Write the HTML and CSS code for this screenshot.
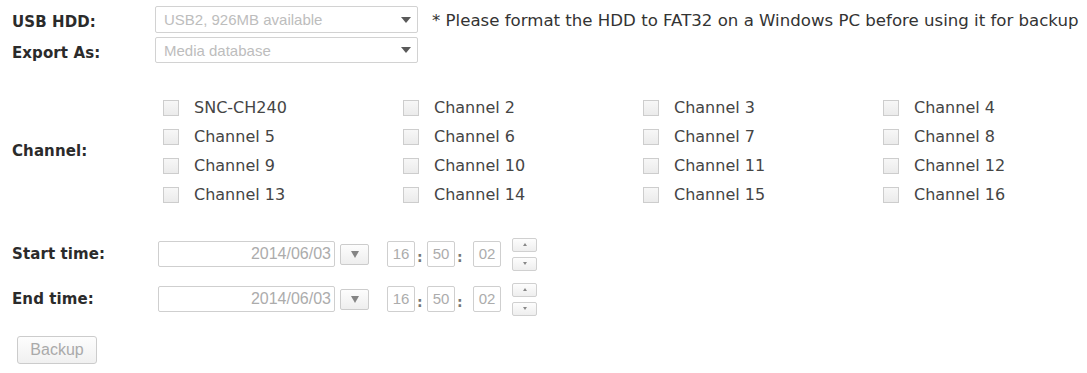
FILE: index.html
```html
<!DOCTYPE html>
<html>
<head>
<meta charset="utf-8">
<link rel="stylesheet" href="styles.css">
</head>
<body>
<div class="form">
  <div class="row row-usb">
    <div class="label">USB HDD:</div>
    <div class="select"><span class="sel-text">USB2, 926MB available</span><span class="sel-arrow"></span></div>
    <div class="note">* Please format the HDD to FAT32 on a Windows PC before using it for backup</div>
  </div>
  <div class="row row-export">
    <div class="label">Export As:</div>
    <div class="select"><span class="sel-text">Media database</span><span class="sel-arrow"></span></div>
  </div>
  <div class="row row-channel">
    <div class="label">Channel:</div>
    <div class="channels">
      <label class="ch"><span class="cb"></span>SNC-CH240</label>
      <label class="ch"><span class="cb"></span>Channel 2</label>
      <label class="ch"><span class="cb"></span>Channel 3</label>
      <label class="ch"><span class="cb"></span>Channel 4</label>
      <label class="ch"><span class="cb"></span>Channel 5</label>
      <label class="ch"><span class="cb"></span>Channel 6</label>
      <label class="ch"><span class="cb"></span>Channel 7</label>
      <label class="ch"><span class="cb"></span>Channel 8</label>
      <label class="ch"><span class="cb"></span>Channel 9</label>
      <label class="ch"><span class="cb"></span>Channel 10</label>
      <label class="ch"><span class="cb"></span>Channel 11</label>
      <label class="ch"><span class="cb"></span>Channel 12</label>
      <label class="ch"><span class="cb"></span>Channel 13</label>
      <label class="ch"><span class="cb"></span>Channel 14</label>
      <label class="ch"><span class="cb"></span>Channel 15</label>
      <label class="ch"><span class="cb"></span>Channel 16</label>
    </div>
  </div>
  <div class="row row-time row-start">
    <div class="label">Start time:</div>
    <div class="date">2014/06/03</div>
    <div class="date-btn"><span class="tri-down"></span></div>
    <div class="tbox">16</div><span class="colon">:</span>
    <div class="tbox">50</div><span class="colon colon-2">:</span>
    <div class="tbox">02</div>
    <div class="spin">
      <div class="spin-btn"><span class="tri-up-s"></span></div>
      <div class="spin-btn"><span class="tri-down-s"></span></div>
    </div>
  </div>
  <div class="row row-time row-end">
    <div class="label">End time:</div>
    <div class="date">2014/06/03</div>
    <div class="date-btn"><span class="tri-down"></span></div>
    <div class="tbox">16</div><span class="colon">:</span>
    <div class="tbox">50</div><span class="colon colon-2">:</span>
    <div class="tbox">02</div>
    <div class="spin">
      <div class="spin-btn"><span class="tri-up-s"></span></div>
      <div class="spin-btn"><span class="tri-down-s"></span></div>
    </div>
  </div>
  <div class="backup">Backup</div>
</div>
</body>
</html>
```
FILE: styles.css
```css
html, body {
  margin: 0;
  padding: 0;
  background: #fff;
}
.form {
  padding: 6px 0 0 12px;
  font-family: "DejaVu Sans", Verdana, sans-serif;
  font-size: 16px;
  color: #444;
}
.row {
  display: flex;
  align-items: center;
}
.label {
  width: 143px;
  flex: none;
  font-weight: bold;
  font-size: 15px;
  letter-spacing: 0.1px;
  color: #2b2b2b;
}
.row-usb .label, .row-export .label {
  padding-top: 5px;
}
.select {
  box-sizing: border-box;
  width: 263px;
  height: 27px;
  border: 1px solid #d2d2d2;
  border-radius: 2px;
  display: flex;
  align-items: center;
  justify-content: space-between;
  padding: 0 6px 0 8px;
  font-family: "Liberation Sans", Arial, sans-serif;
  font-size: 15px;
  color: #bdbdbd;
}
.row-export {
  margin-top: 4px;
}
.row-export .select {
  height: 26px;
}
.sel-arrow {
  width: 0;
  height: 0;
  border-left: 5px solid transparent;
  border-right: 5px solid transparent;
  border-top: 6px solid #5a5a5a;
}
.note {
  margin-left: 14px;
  padding-top: 1px;
  color: #333;
  font-size: 16.6px;
}
.row-channel {
  margin-top: 30px;
}
.channels {
  margin-left: 8px;
  display: grid;
  grid-template-columns: repeat(4, 240px);
  grid-auto-rows: 29px;
}
.ch {
  display: flex;
  align-items: center;
  color: #454545;
}
.cb {
  box-sizing: border-box;
  width: 16px;
  height: 16px;
  border: 1px solid #cdcdcd;
  background: linear-gradient(#f7f7f7, #ebebeb);
  margin-right: 15px;
  flex: none;
}
.row-time {
  height: 34px;
}
.row-start {
  margin-top: 28px;
}
.row-end {
  margin-top: 11px;
}
.date {
  box-sizing: border-box;
  margin-left: 3px;
  width: 177px;
  height: 26px;
  border: 1px solid #cfcfcf;
  border-radius: 2px;
  text-align: right;
  padding-right: 3px;
  line-height: 24px;
  font-family: "Liberation Sans", Arial, sans-serif;
  font-size: 16px;
  color: #acacac;
}
.date-btn {
  box-sizing: border-box;
  margin-left: 5px;
  width: 29px;
  height: 21px;
  border: 1px solid #cccccc;
  border-radius: 2px;
  background: linear-gradient(#fdfdfd, #eeeeee);
  display: flex;
  align-items: center;
  justify-content: center;
}
.tri-down {
  width: 0;
  height: 0;
  border-left: 4px solid transparent;
  border-right: 4px solid transparent;
  border-top: 7px solid #858585;
}
.tbox {
  box-sizing: border-box;
  width: 28px;
  height: 26px;
  border: 1px solid #cfcfcf;
  border-radius: 2px;
  text-align: center;
  line-height: 24px;
  font-family: "Liberation Sans", Arial, sans-serif;
  font-size: 15px;
  color: #acacac;
}
.date-btn + .tbox {
  margin-left: 18px;
}
.colon {
  width: 12px;
  text-align: left;
  padding-left: 2px;
  box-sizing: border-box;
  font-weight: bold;
  color: #777;
  font-size: 14px;
  padding-top: 6px;
}
.colon-2 {
  width: 18px;
}
.spin {
  margin-left: 11px;
  display: flex;
  flex-direction: column;
  gap: 5px;
}
.spin-btn {
  box-sizing: border-box;
  width: 25px;
  height: 14px;
  border: 1px solid #d0d0d0;
  border-radius: 2px;
  background: linear-gradient(#fdfdfd, #eeeeee);
  display: flex;
  align-items: center;
  justify-content: center;
}
.tri-up-s {
  width: 0;
  height: 0;
  border-left: 2px solid transparent;
  border-right: 2px solid transparent;
  border-bottom: 3px solid #888;
}
.tri-down-s {
  width: 0;
  height: 0;
  border-left: 2px solid transparent;
  border-right: 2px solid transparent;
  border-top: 3px solid #888;
}
.backup {
  box-sizing: border-box;
  margin-top: 20px;
  margin-left: 5px;
  width: 80px;
  height: 28px;
  border: 1px solid #cccccc;
  border-radius: 3px;
  background: linear-gradient(#fdfdfd, #f0f0f0);
  font-family: "Liberation Sans", Arial, sans-serif;
  font-size: 16px;
  color: #aaaaaa;
  text-align: center;
  line-height: 26px;
}
```
